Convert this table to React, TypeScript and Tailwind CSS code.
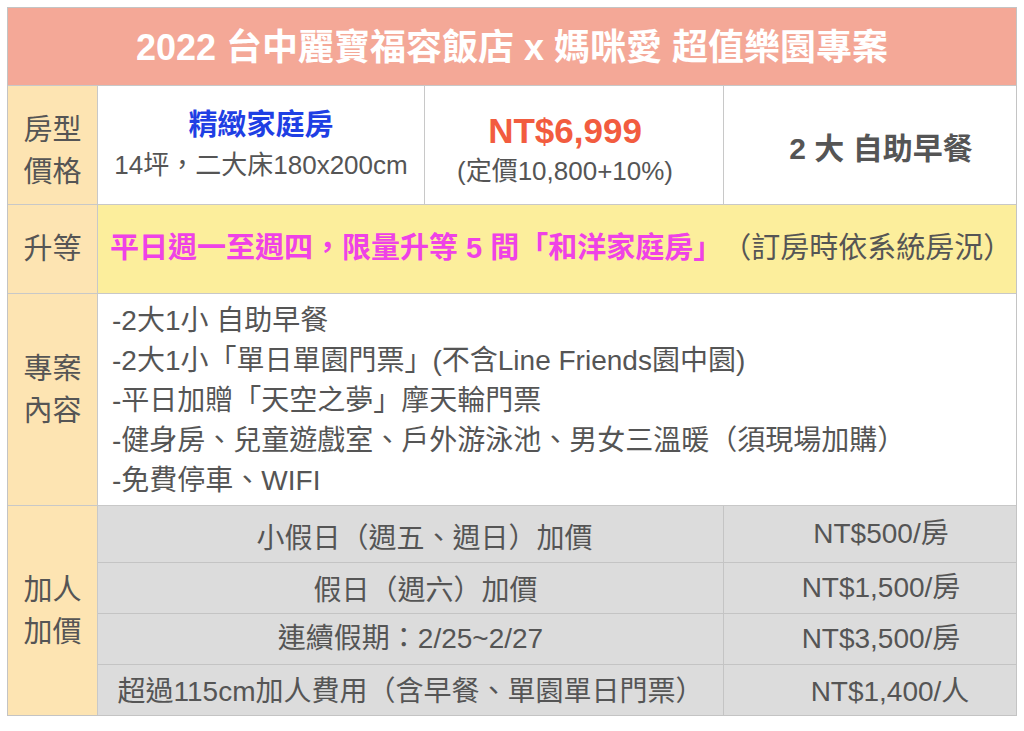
const font = "font-['Liberation_Sans','Noto_Sans_CJK_TC',sans-serif]";

const extras = [
  { label: "小假日（週五、週日）加價", price: "NT$500/房", h: "h-[57px]", pad: "pt-[10px] pl-[28px]" },
  { label: "假日（週六）加價", price: "NT$1,500/房", h: "h-[51px]", pad: "pt-[5px] pl-[30px]" },
  { label: "連續假期：2/25~2/27", price: "NT$3,500/房", h: "h-[51px]", pad: "pt-[0px]" },
  { label: "超過115cm加人費用（含早餐、單園單日門票）", price: "NT$1,400/人", h: "h-[50px]", pad: "pt-[4px]" },
];

function Label({ lines, className = "" }: { lines: string[]; className?: string }) {
  return (
    <div
      className={`w-[90px] shrink-0 bg-[#fde4b2] border-r border-[#c8c8c8] flex flex-col items-center justify-center text-[29px] leading-[42px] text-[#555] ${className}`}
    >
      {lines.map((l) => (
        <span key={l}>{l}</span>
      ))}
    </div>
  );
}

export default function App() {
  return (
    <div className={`min-h-[731px] bg-white pt-[7px] pl-[7px] ${font}`}>
      <div className="w-[1010px] border border-[#c4c4c4]">
        <div className="h-[78px] bg-[#f4a897] border-b border-[#c8c8c8] flex items-center justify-center pt-[2px]">
          <h1 className="text-[36px] font-bold text-white">
            2022 台中麗寶福容飯店 x 媽咪愛 超值樂園專案
          </h1>
        </div>

        {/* 房型價格 */}
        <div className="h-[119px] flex border-b border-[#c8c8c8]">
          <Label lines={["房型", "價格"]} className="pt-[12px]" />
          <div className="w-[327px] border-r border-[#c8c8c8] flex flex-col items-center justify-center">
            <span className="text-[29px] leading-[40px] font-bold text-[#1f3fe4]">精緻家庭房</span>
            <span className="text-[26px] leading-[40px] text-[#555]">14坪，二大床180x200cm</span>
          </div>
          <div className="w-[299px] border-r border-[#c8c8c8] flex flex-col items-center justify-center pt-[12px] pr-[18px]">
            <span className="text-[35px] leading-[40px] font-bold text-[#f25c3f]">NT$6,999</span>
            <span className="text-[26px] leading-[40px] text-[#555]">(定價10,800+10%)</span>
          </div>
          <div className="flex-1 flex items-center justify-center pt-[6px] pl-[22px]">
            <span className="text-[30px] font-bold text-[#555]">2 大 自助早餐</span>
          </div>
        </div>

        {/* 升等 */}
        <div className="h-[89px] flex border-b border-[#c8c8c8]">
          <Label lines={["升等"]} />
          <div className="flex-1 bg-[#fcee9c] flex items-center pl-[12px] text-[29px]">
            <span className="font-bold text-[#ef42e6]">平日週一至週四，限量升等 5 間「和洋家庭房」</span>
            <span className="text-[#555]">（訂房時依系統房況）</span>
          </div>
        </div>

        {/* 專案內容 */}
        <div className="h-[212px] flex border-b border-[#c8c8c8]">
          <Label lines={["專案", "內容"]} className="pb-[20px]" />
          <div className="flex-1 flex flex-col justify-center pl-[14px] pt-[2px] text-[28px] leading-[40px] text-[#555]">
            <span>-2大1小 自助早餐</span>
            <span>-2大1小「單日單園門票」(不含Line Friends園中園)</span>
            <span>-平日加贈「天空之夢」摩天輪門票</span>
            <span>-健身房、兒童遊戲室、戶外游泳池、男女三溫暖（須現場加購）</span>
            <span>-免費停車、WIFI</span>
          </div>
        </div>

        {/* 加人加價 */}
        <div className="flex">
          <Label lines={["加人", "加價"]} />
          <div className="flex-1 flex flex-col bg-[#dcdcdc] text-[28px] text-[#555]">
            {extras.map((e, i) => (
              <div
                key={e.label}
                className={`${e.h} flex ${i < extras.length - 1 ? "border-b border-[#c4c4c4]" : ""}`}
              >
                <div className={`w-[626px] border-r border-[#c4c4c4] flex items-center justify-center ${e.pad}`}>
                  {e.label}
                </div>
                <div className={`flex-1 flex items-center justify-center ${i === 3 ? "pl-[40px] pt-[4px]" : "pl-[22px]"}`}>
                  {e.price}
                </div>
              </div>
            ))}
          </div>
        </div>
      </div>
    </div>
  );
}
